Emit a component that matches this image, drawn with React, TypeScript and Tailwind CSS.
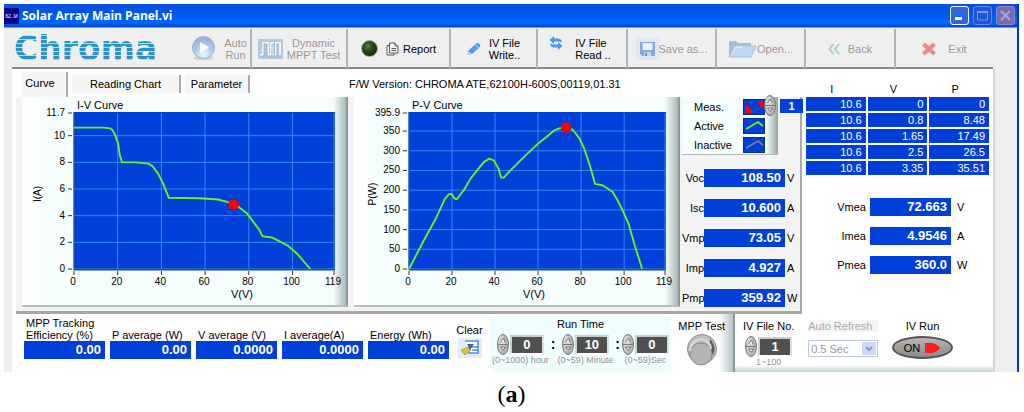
import { ReactNode } from "react";
import clsx from "clsx";

type Point = [number, number];

type ChartProps = {
    title: string;
    yLabel: string;
    left: number;
    width: number;
    xLabelAt: number;
    yMax: number;
    yTicks: number[];
    points: Point[];
    marker: Point;
}

const X_TICKS = [0, 20, 40, 60, 80, 100, 119];

const ivPoints: Point[] = [
    [0, 10.6], [13.4, 10.6], [16.4, 10.55], [17.7, 10.4], [18.7, 10.1], [20.2, 9.4], [21, 8.5], [22, 8], [28.6, 8],
    [34, 7.9], [36, 7.7], [38.5, 7.15], [40.8, 6.4], [43.4, 5.34], [57.5, 5.31], [65.9, 5.21], [70.5, 5.01],
    [73, 4.9], [75.8, 4.6], [79.1, 4.19], [82.6, 3.42], [84.9, 2.92], [86.2, 2.47], [91, 2.34], [97.9, 1.75],
    [102.4, 1.1], [108.1, 0],
];

const pvPoints: Point[] = [
    [0, 0], [7.8, 82], [12.4, 127], [16.7, 178], [18.6, 190], [19.8, 190], [21.1, 179], [22.2, 177], [25.6, 201],
    [28.7, 230], [32.2, 254], [34.9, 272], [37.4, 280], [39.5, 275], [41.7, 254], [42.8, 232], [44, 232],
    [47.3, 251], [54.3, 289], [59.8, 317], [63.6, 334], [67.4, 351], [69.8, 357], [72.6, 359], [76, 354],
    [79.1, 333], [81.4, 306], [84, 264], [86.5, 216], [90.2, 212], [94.6, 196], [96.9, 175], [99.2, 150],
    [102, 116], [105.1, 57], [108.4, 0],
];

const rows = [
    ["10.6", "0", "0"],
    ["10.6", "0.8", "8.48"],
    ["10.6", "1.65", "17.49"],
    ["10.6", "2.5", "26.5"],
    ["10.6", "3.35", "35.51"],
];

const readings = [
    { name: "Voc", value: "108.50", unit: "V" },
    { name: "Isc", value: "10.600", unit: "A" },
    { name: "Vmp", value: "73.05", unit: "V" },
    { name: "Imp", value: "4.927", unit: "A" },
    { name: "Pmp", value: "359.92", unit: "W" },
];

const measured = [
    { name: "Vmea", value: "72.663", unit: "V" },
    { name: "Imea", value: "4.9546", unit: "A" },
    { name: "Pmea", value: "360.0", unit: "W" },
];

const averages = [
    { name: "MPP Tracking Efficiency (%)", value: "0.00" },
    { name: "P average (W)", value: "0.00" },
    { name: "V average (V)", value: "0.0000" },
    { name: "I average(A)", value: "0.0000" },
    { name: "Energy (Wh)", value: "0.00" },
];

function Chart({ title, yLabel, left, width, xLabelAt, yMax, yTicks, points, marker }: ChartProps) {
    const top = 16;
    const height = 156;
    const px = (x: number) => left + (x / 119) * width;
    const py = (y: number) => top + height - (y / yMax) * height;

    return (
        <div className="min-w-0 border-r-2 border-b-2 border-r-[#8c9999] border-b-[#b4c0c0] bg-[linear-gradient(90deg,#fff_0,#f6fefd_6%,#f6fefd_96%,#a9b8b8_100%)]">
            <svg viewBox="0 0 324 207" className="block w-full" fontFamily="Liberation Sans, sans-serif" fontSize="10" role="img" aria-label={title}>
                <text x={left + 3} y="12" fontSize="11">{title}</text>
                <rect x={left} y={top - 1} width={width + 1} height={height + 2} fill="#003fd8" />
                {X_TICKS.map((t) => (
                    <g key={t}>
                        <line x1={px(t)} x2={px(t)} y1={top} y2={top + height} stroke="#2f8cf5" />
                        <line x1={px(t)} x2={px(t)} y1={top + height + 2} y2={top + height + 6} stroke="#333" />
                        <text x={px(t) - 1} y={top + height + 16} textAnchor="middle">{t}</text>
                    </g>
                ))}
                {[...yTicks, yMax].map((t) => (
                    <g key={t}>
                        {t !== yMax && <line x1={left} x2={left + width} y1={py(t)} y2={py(t)} stroke="#2f8cf5" />}
                        <line x1={left - 6} x2={left - 2} y1={py(t)} y2={py(t)} stroke="#333" />
                        <text x={left - 9} y={py(t) + 3} textAnchor="end">{t}</text>
                    </g>
                ))}
                <path d={`M${left} ${top - 1}V${top + height + 1}H${left + width + 1}`} fill="none" stroke="#1c3f8a" />
                <polyline points={points.map(([x, y]) => `${px(x)},${py(y)}`).join(" ")} fill="none" stroke="#66f51e" strokeWidth="1.9" strokeLinejoin="round" />
                <circle cx={px(marker[0])} cy={py(marker[1])} r="5.3" fill="#f00" />
                <text x={xLabelAt} y={top + height + 29} textAnchor="middle" fontSize="11">V(V)</text>
                <text transform={`translate(${left - 33} 97) rotate(-90)`} textAnchor="middle">{yLabel}</text>
            </svg>
        </div>
    );
}

function Reading({ name, value, unit, wide }: { name: string; value: string; unit: string; wide?: boolean }) {
    return (
        <div className="flex items-center">
            <label htmlFor={name} className={clsx("shrink-0 text-right", wide ? "w-16 pr-1" : "w-[22px] whitespace-nowrap")}>{name}</label>
            <output id={name} className="block h-[18px] w-[81px] shrink-0 bg-[#003fd8] pr-1 text-right text-[13px] leading-[18px] font-bold text-white">{value}</output>
            <span className={wide ? "pl-[6px]" : "pl-[2px]"}>{unit}</span>
        </div>
    );
}

function Knobs() {
    return (
        <svg width="12" height="21" viewBox="0 0 12 21" aria-hidden="true" className="shrink-0">
            <ellipse cx="6" cy="10.5" rx="5.5" ry="10" fill="#b5b5b5" stroke="#777" />
            <ellipse cx="4.8" cy="9.5" rx="3.4" ry="8" fill="#d4d4d4" />
            <path d="M1 10.5H11" stroke="#777" />
            <path d="M3.5 8L6.5 4L8 8M3.5 13H8.5L6 16.5Z" fill="#eee" stroke="#666" strokeWidth="0.9" />
        </svg>
    );
}

function NumberField({ id, label, value, hint }: { id: string; label: string; value: string; hint: string }) {
    return (
        <div className="flex flex-col items-center">
            <div className="flex items-center gap-px">
                <Knobs />
                <div className="border-2 border-t-[#c3cfcd] border-r-[#d9e4e2] border-b-white border-l-[#c9d3d1]">
                    <input id={id} aria-label={label} defaultValue={value} className="block h-4 w-[30px] bg-[#505050] text-center text-[13px] leading-4 font-bold text-white" />
                </div>
            </div>
            <span className="text-[9px] leading-[10px] whitespace-nowrap text-[#8f9696]">{hint}</span>
        </div>
    );
}

function ToolButton({ children, muted, last }: { children: ReactNode; muted?: boolean; last?: boolean }) {
    return (
        <button type="button" className={clsx("my-px flex items-center justify-center gap-2 text-[11px] leading-3", muted ? "text-[#999]" : "text-black", !last && "border-r-2 border-[#aab4bb]")}>
            {children}
        </button>
    );
}

function Toolbar() {
    return (
        <header className="mr-[2px] grid h-[41px] grid-cols-[176fr_64fr_96fr_103fr_87fr_90fr_89fr_89fr_90fr_97fr] border-b-2 border-[#888]">
            <div className="pl-[2px]">
                <span className="block bg-[repeating-linear-gradient(180deg,#2b93c4_0,#2b93c4_3px,#b4dbeb_3px,#b4dbeb_4px)] bg-clip-text pt-px font-['DejaVu_Sans'] text-[33px] leading-10 font-bold text-transparent">Chroma</span>
            </div>
            <ToolButton muted>
                <svg width="25" height="25" viewBox="0 0 25 25" className="shrink-0">
                    <defs>
                        <radialGradient id="play" cx="50%" cy="80%" r="80%">
                            <stop offset="0" stopColor="#eefbff" />
                            <stop offset="0.5" stopColor="#a8cdf5" />
                            <stop offset="1" stopColor="#9da5d8" />
                        </radialGradient>
                    </defs>
                    <ellipse cx="12.5" cy="22" rx="10" ry="2.5" fill="#d3d3d3" />
                    <circle cx="12.5" cy="11.5" r="11" fill="url(#play)" stroke="#a3b0d0" />
                    <path d="M9 6L18 11.5L9 17Z" fill="#fff" />
                </svg>
                <span>Auto<br />Run</span>
            </ToolButton>
            <ToolButton muted>
                <svg width="25" height="20" viewBox="0 0 25 20" className="shrink-0">
                    <rect width="25" height="20" fill="#b3c9dc" />
                    <path d="M2 16H5V4H10V16H13V4H15V16H18V4H22V16" fill="none" stroke="#fff" strokeWidth="1.6" />
                    <path d="M3 17H6V5H9V17H14V5H16V17H19V5H21" fill="none" stroke="#88a8c5" strokeWidth="0.7" />
                </svg>
                <span className="-ml-1">Dynamic<br />MPPT Test</span>
            </ToolButton>
            <ToolButton>
                <svg width="17" height="17" viewBox="0 0 17 17" className="shrink-0">
                    <defs>
                        <radialGradient id="led" cx="40%" cy="35%" r="65%">
                            <stop offset="0" stopColor="#55803f" />
                            <stop offset="0.5" stopColor="#234a12" />
                            <stop offset="1" stopColor="#102708" />
                        </radialGradient>
                    </defs>
                    <circle cx="8.5" cy="8.5" r="8" fill="url(#led)" stroke="#aaa" />
                </svg>
                <svg width="13" height="14" viewBox="0 0 13 14" fill="#f8f8f8" stroke="#555" className="shrink-0">
                    <path d="M1 3.5H8V13H1Z" />
                    <path d="M3.5 1H9L12 4V11H3.5Z" />
                    <path d="M9 1V4H12M5.5 6.5H10M5.5 8.5H10" />
                </svg>
                <span className="-ml-1">Report</span>
            </ToolButton>
            <ToolButton>
                <svg width="14" height="14" viewBox="0 0 14 14" className="shrink-0">
                    <path d="M1 9L9 1.5Q11 0.5 12.5 2T13 5L5 12L0.5 13Z" fill="#529af0" />
                    <path d="M1 9L5 12L0.5 13Z" fill="#b6d6fa" />
                    <path d="M8 2.5L12 6" stroke="#c4ddfb" />
                </svg>
                <span>IV File<br />Write..</span>
            </ToolButton>
            <ToolButton>
                <svg width="14" height="14" viewBox="0 0 14 14" fill="#4a96ea" className="mb-3 shrink-0">
                    <path d="M0.5 4L5 0V2.5H9Q12.5 2.5 13 6.5Q11 5.2 5 5.6V8Z" />
                    <path d="M13.5 10L9 14V11.5H5Q1.5 11.5 1 7.5Q3 8.8 9 8.4V6Z" />
                </svg>
                <span className="pr-1 pl-1 text-left">IV File<br />Read ..</span>
            </ToolButton>
            <ToolButton muted>
                <span className="-mr-2 shrink-0 bg-[#dfe8f4] p-1">
                    <svg width="15" height="14" viewBox="0 0 15 14">
                        <path d="M0 0H15V14H2L0 12Z" fill="#86aadd" />
                        <path d="M2.5 1H12.5V8H2.5Z" fill="#eaf3fd" />
                        <path d="M4 10H11V14H4Z" fill="#c3d7ef" />
                        <path d="M5 11H7V14H5Z" fill="#6d93c8" />
                    </svg>
                </span>
                <span className="whitespace-nowrap">Save as...</span>
            </ToolButton>
            <ToolButton muted>
                <svg width="29" height="18" viewBox="0 0 29 18" className="-mr-2 shrink-0">
                    <path d="M1 17V2Q1 1 2 1H8L10 3H23V17Z" fill="#9cc0e4" />
                    <path d="M1 17L6 6H28L23 17Z" fill="#bfd8f0" stroke="#a5c4e2" />
                    <path d="M4 15L8 7H15" stroke="#e8f3fc" fill="none" />
                </svg>
                <span>Open...</span>
            </ToolButton>
            <ToolButton muted>
                <svg width="12" height="12" viewBox="0 0 12 12" fill="none" stroke="#a8cbdc" strokeWidth="2">
                    <path d="M5.5 1L1.5 6L5.5 11M11 1L7 6L11 11" />
                </svg>
                <span>Back</span>
            </ToolButton>
            <ToolButton muted last>
                <svg width="14" height="14" viewBox="0 0 14 14" stroke="#f58585" strokeWidth="4">
                    <path d="M1.5 2L12.5 12M12.5 2L1.5 12" />
                </svg>
                <span className="pl-1">Exit</span>
            </ToolButton>
        </header>
    );
}

function TitleBar() {
    const box = "flex size-[19px] items-center justify-center rounded-[3px] border";
    return (
        <div className="flex h-[23px] items-center bg-[linear-gradient(180deg,#0a50dc_0,#0054e8_30%,#0066ff_80%,#0048c8_100%)] pr-[2px]">
            <span className="flex h-4 w-[15px] shrink-0 items-center justify-center bg-[#04048c] text-[5px] text-white">62..M</span>
            <h1 className="flex-1 pl-[3px] font-['Open_Sans'] text-xs font-bold text-white">Solar Array Main Panel.vi</h1>
            <div className="flex gap-1">
                <button type="button" aria-label="Minimize" className={clsx(box, "border-white bg-[#2d66e4]")}>
                    <svg width="11" height="11"><path d="M1 8.5H8" stroke="#fff" strokeWidth="3" /></svg>
                </button>
                <button type="button" aria-label="Maximize" className={clsx(box, "border-[#5b8af0] bg-[#1f55d4]")}>
                    <svg width="11" height="11" fill="none" stroke="#6f99f2"><path d="M0.5 1.5H10.5V10H0.5ZM0.5 2.5H10.5" /></svg>
                </button>
                <button type="button" aria-label="Close" className={clsx(box, "border-[#8f87c8] bg-[#766db0]")}>
                    <svg width="11" height="11" stroke="#aba5d6" strokeWidth="2"><path d="M1 1L10 10M10 1L1 10" /></svg>
                </button>
            </div>
        </div>
    );
}

function Legend() {
    const item = "flex items-center justify-between";
    return (
        <div className="relative mr-[22px] border-b border-[#aebcbc] bg-[linear-gradient(90deg,#f6fefd_0,#f6fefd_88%,#93a3a3_100%)]">
            <ul className="flex flex-col gap-[3px] pt-[2px] pr-[13px] pb-px pl-3">
                <li className={item}>
                    Meas.
                    <svg width="22" height="16"><rect width="22" height="16" fill="#003fd8" stroke="#123" /><path d="M2 7H5L9 11V14H2ZM15 2H20V9L16 7Z" fill="#f00" /></svg>
                </li>
                <li className={item}>
                    Active
                    <svg width="22" height="16"><rect width="22" height="16" fill="#003fd8" stroke="#123" /><path d="M3 11L15 4L20 8" fill="none" stroke="#66f51e" strokeWidth="1.8" /></svg>
                </li>
                <li className={item}>
                    Inactive
                    <svg width="22" height="16"><rect width="22" height="16" fill="#003fd8" stroke="#123" /><path d="M3 11L15 4L20 8" fill="none" stroke="#77808c" strokeWidth="1.8" /></svg>
                </li>
            </ul>
            {/* plot index sits on the corner of the legend */}
            <div className="absolute -top-[2px] -right-[25px] flex items-center gap-1">
                <Knobs />
                <input aria-label="Plot" defaultValue="1" className="h-[14px] w-[23px] bg-[#003fd8] text-center text-[11px] font-bold text-white" />
            </div>
        </div>
    );
}

export default function App() {
    return (
        <main className="bg-white pt-1 pr-[5px] pl-1 font-['Liberation_Sans',sans-serif] text-[11px] leading-3 text-black">
            <div className="border-r-2 border-[#0831d9] bg-[#efefef]">
                <TitleBar />
                <div className="border-t border-[#999] pr-[22px] pl-2">
                    <Toolbar />

                    <div className="border-r-2 border-[#cfd8d8] bg-white">
                        <div className="flex">
                            <div className="min-w-0 flex-1 pl-1">
                                <div className="flex h-7 items-start pt-[3px] pl-[6px]">
                                    <div role="tablist" className="flex items-start gap-1">
                                        <button type="button" role="tab" aria-selected="true" className="h-[25px] w-[46px] border-r-2 border-[#aaa] bg-[#f5f5f5] pr-2 pb-1">Curve</button>
                                        <button type="button" role="tab" aria-selected="false" className="mt-[3px] h-[18px] w-[109px] border-r-2 border-[#aaa] bg-[#f5f5f5]">Reading Chart</button>
                                        <button type="button" role="tab" aria-selected="false" className="mt-[3px] h-[18px] w-[65px] border-r-2 border-[#aaa] bg-[#f5f5f5]">Parameter</button>
                                    </div>
                                    <p className="pt-[6px] pl-[99px] whitespace-nowrap">F/W Version: CHROMA ATE,62100H-600S,00119,01.31</p>
                                </div>

                                <div className="grid grid-cols-[326fr_6fr_326fr_2fr_118fr] border-r-2 border-b-[3px] border-[#a8a8a8] bg-[#f3f3f3] pb-1 pl-[6px]">
                                    <Chart title="I-V Curve" yLabel="I(A)" left={52} width={260} xLabelAt={220} yMax={11.7} yTicks={[0, 2, 4, 6, 8, 10]} points={ivPoints} marker={[73.05, 4.83]} />
                                    <span />
                                    <Chart title="P-V Curve" yLabel="P(W)" left={55} width={256} xLabelAt={180} yMax={395.9} yTicks={[0, 50, 100, 150, 200, 250, 300, 350]} points={pvPoints} marker={[73.05, 359]} />
                                    <span />
                                    <div>
                                        <Legend />
                                        <div className="flex flex-col gap-3 pt-[14px]">
                                            {readings.map((r) => <Reading key={r.name} {...r} />)}
                                        </div>
                                    </div>
                                </div>
                            </div>

                            <div className="w-[191px] shrink-0 pt-3">
                                <table className="ml-[2px] w-[187px] table-fixed border-separate border-spacing-x-[2px] border-spacing-y-[2px]">
                                    <thead>
                                        <tr>
                                            <th className="h-3 pr-2 font-normal">I</th>
                                            <th className="h-3 pr-2 font-normal">V</th>
                                            <th className="h-3 pr-2 font-normal">P</th>
                                        </tr>
                                    </thead>
                                    <tbody>
                                        {rows.map((row) => (
                                            <tr key={row[1]}>
                                                {row.map((cell, i) => (
                                                    <td key={i} className="h-[14px] bg-[#003fd8] pr-1 text-right text-white">{cell}</td>
                                                ))}
                                            </tr>
                                        ))}
                                    </tbody>
                                </table>
                                <div className="flex flex-col gap-[11px] pt-[21px] pl-1">
                                    {measured.map((r) => <Reading key={r.name} {...r} wide />)}
                                </div>
                            </div>
                        </div>

                        <div className="flex h-[58px]">
                            <div className="flex min-w-0 flex-1 items-start justify-between border-r-2 border-[#8c9999] bg-[linear-gradient(90deg,#fff_0,#fff_98%,#b9c6c6_100%)] pr-2 pl-3">
                                <div className="flex gap-[5px] pt-[3px]">
                                    {averages.map((a) => (
                                        <div key={a.name} className="flex w-[81px] flex-col">
                                            <label htmlFor={a.name} className="flex h-6 items-end pl-[2px]">{a.name}</label>
                                            <output id={a.name} className="block h-[18px] bg-[#003fd8] pr-1 text-right text-[13px] leading-[18px] font-bold text-white">{a.value}</output>
                                        </div>
                                    ))}
                                </div>
                                <button type="button" className="flex flex-col items-center gap-[2px] pt-[10px]">
                                    Clear
                                    <svg width="24" height="20" viewBox="0 0 24 20">
                                        <rect width="24" height="20" fill="#e2ecf7" />
                                        <path d="M7 3H20V15H10" fill="#fff" stroke="#4a8be0" strokeWidth="1.6" />
                                        <path d="M11 9H20M14 12H19" stroke="#4a8be0" strokeWidth="1.4" />
                                        <path d="M3 12L10 9L13 12L7 17Z" fill="#d8c64a" stroke="#8c8340" strokeWidth="0.6" />
                                        <path d="M9 6H16L12 12Z" fill="#4d5da8" />
                                    </svg>
                                </button>
                                <div role="group" aria-labelledby="run-time" className="flex h-[54px] flex-col items-center self-end bg-[#f0fdfd] px-[2px]">
                                    <span id="run-time" className="pb-1">Run Time</span>
                                    <div className="flex gap-[2px]">
                                        <NumberField id="hours" label="Hours" value="0" hint="(0~1000) hour" />
                                        <b className="text-sm leading-5">:</b>
                                        <NumberField id="minutes" label="Minutes" value="10" hint="(0~59) Minute" />
                                        <b className="text-sm leading-5">:</b>
                                        <NumberField id="seconds" label="Seconds" value="0" hint="(0~59)Sec" />
                                    </div>
                                </div>
                                <button type="button" className="flex flex-col items-center gap-[2px] pt-[6px] whitespace-nowrap">
                                    MPP Test
                                    <svg width="32" height="32" viewBox="0 0 32 32">
                                        <circle cx="16" cy="15" r="14.5" fill="#bdbdbd" stroke="#8d8d8d" />
                                        <path d="M24 5Q31 12 27 21L23 17Z" fill="#5c5c5c" />
                                        <circle cx="15" cy="20" r="11" fill="#b4b4b4" stroke="#858585" />
                                        <path d="M4 17Q5 6 16 5Q24 6 25 15" fill="none" stroke="#d9d9d9" strokeWidth="2" />
                                    </svg>
                                </button>
                            </div>

                            <div className="flex w-[258px] shrink-0 items-start justify-between bg-[linear-gradient(180deg,#fff_0,#fff_88%,#c3d0d0_100%)] pt-[6px] pr-10 pl-2">
                                <div className="flex flex-col items-center gap-1">
                                    <label htmlFor="file">IV File No.</label>
                                    <NumberField id="file" label="IV File No." value="1" hint="1~100" />
                                </div>
                                <div className="flex flex-col gap-2">
                                    <label htmlFor="refresh" className="bg-[#f5f5f5] text-[#aaa]">Auto Refresh</label>
                                    <div className="relative">
                                        <select id="refresh" disabled className="block h-[17px] w-[70px] appearance-none border border-[#b9c7dc] bg-white pl-[2px] text-[11px] text-[#999] opacity-100">
                                            <option>0.5 Sec</option>
                                        </select>
                                        <svg width="14" height="13" className="absolute top-[2px] right-[2px]">
                                            <rect width="14" height="13" rx="1" fill="#cbd9f6" />
                                            <path d="M4 5L7 8L10 5" fill="none" stroke="#8c98b4" strokeWidth="2" />
                                        </svg>
                                    </div>
                                </div>
                                <div className="flex flex-col items-center gap-1">
                                    IV Run
                                    <button type="button" aria-label="IV Run" aria-pressed="true" className="flex h-[23px] w-[61px] items-center justify-center gap-1 rounded-[50%] border-2 border-[#555] bg-[linear-gradient(180deg,#b5b5b5,#8a8a8a)]">
                                        ON
                                        <svg width="17" height="12"><path d="M1 1H8Q13 2 16 6Q13 10 8 11H1Z" fill="#ff1c1c" /></svg>
                                    </button>
                                </div>
                            </div>
                        </div>
                    </div>
                </div>
            </div>
            <p className="py-2 text-center font-['Liberation_Serif',serif] text-2xl leading-7">(<b>a</b>)</p>
        </main>
    );
}
